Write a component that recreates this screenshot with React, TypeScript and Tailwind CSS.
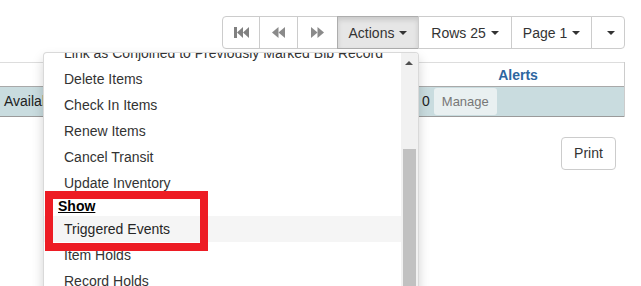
import React from "react";

const Caret = () => (
  <span className="inline-block ml-[5px] w-0 h-0 border-l-[4px] border-r-[4px] border-t-[4px] border-l-transparent border-r-transparent border-t-[#333] align-middle" />
);

const FastBack = () => (
  <svg width="15" height="11" viewBox="0 0 15 11">
    <rect x="0" y="0" width="3" height="11" fill="#808080" />
    <polygon points="3,5.5 9,0 9,11" fill="#808080" />
    <polygon points="9,5.5 15,0 15,11" fill="#808080" />
  </svg>
);
const Back = () => (
  <svg width="13" height="11" viewBox="0 0 13 11">
    <polygon points="0,5.5 6.5,0 6.5,11" fill="#8a8a8a" />
    <polygon points="6.5,5.5 13,0 13,11" fill="#8a8a8a" />
  </svg>
);
const Fwd = () => (
  <svg width="13" height="11" viewBox="0 0 13 11">
    <polygon points="0,0 6.5,5.5 0,11" fill="#8a8a8a" />
    <polygon points="6.5,0 13,5.5 6.5,11" fill="#8a8a8a" />
  </svg>
);

const items1 = [
  "Link as Conjoined to Previously Marked Bib Record",
  "Delete Items",
  "Check In Items",
  "Renew Items",
  "Cancel Transit",
  "Update Inventory",
];
const items2 = ["Item Holds", "Record Holds", "Item Notes"];

export default function App() {
  return (
    <div
      className="relative w-[641px] h-[286px] overflow-hidden bg-white text-[14px] text-[#333]"
      style={{ fontFamily: '"Liberation Sans", Arial, sans-serif' }}
    >
      {/* toolbar */}
      <div className="flex justify-end pt-[16px] pr-[16px]">
        <div className="flex h-[33px]">
          <div className="w-[38px] flex items-center justify-center border border-[#ccc] rounded-l-[4px] bg-white">
            <FastBack />
          </div>
          <div className="w-[39px] -ml-px flex items-center justify-center border border-[#ccc] bg-white">
            <Back />
          </div>
          <div className="w-[41px] -ml-px flex items-center justify-center border border-[#ccc] bg-white">
            <Fwd />
          </div>
          <div className="w-[82px] -ml-px flex items-center justify-center pt-px border border-[#adadad] bg-[#e6e6e6] shadow-[inset_0_3px_5px_rgba(0,0,0,0.125)]">
            Actions
            <Caret />
          </div>
          <div className="w-[94px] -ml-px flex items-center justify-center pt-px border border-[#ccc] bg-white">
            Rows 25
            <Caret />
          </div>
          <div className="w-[81px] -ml-px flex items-center justify-center pt-px border border-[#ccc] bg-white">
            Page 1
            <Caret />
          </div>
          <div className="w-[34px] -ml-px flex items-center justify-center pt-px border border-[#ccc] rounded-r-[4px] bg-white">
            <Caret />
          </div>
        </div>
      </div>

      {/* table */}
      <div className="mt-[13px] w-[625px] border-r border-[#ccc]">
        <div className="flex h-[24px] pt-[2px] border-t border-[#ddd] items-center">
          <div className="w-[412px]" />
          <div className="flex-1 text-center font-bold text-[#2d669f]">Alerts</div>
        </div>
        <div className="flex h-[31px] items-center bg-[#c9dcdf] border-t border-[#a9a9a9] border-b border-b-[#9a9a9a]">
          <div className="w-[422px] pl-[4px] text-[#222]">Available</div>
          <div className="text-[#222]">0</div>
          <div className="ml-[4px] w-[63px] h-[27px] flex items-center justify-center rounded-[3px] bg-[#e9f0f1] text-[#777] text-[13px]">
            Manage
          </div>
        </div>
      </div>

      {/* print */}
      <div className="flex justify-end pr-[25px] mt-[20px]">
        <div className="w-[55px] h-[33px] flex items-center justify-center border border-[#ccc] rounded-[4px] bg-white text-[#333]">
          Print
        </div>
      </div>

      {/* dropdown */}
      <div className="absolute left-[43px] top-[52px] w-[376px] h-[260px] bg-white border border-[rgba(0,0,0,0.15)] rounded-[4px] shadow-[0_6px_12px_rgba(0,0,0,0.175)] overflow-hidden">
        <div className="mt-[-13px] mr-[17px]">
          {items1.map((t) => (
            <div key={t} className="h-[26px] leading-[20px] py-[3px] pl-[20px] whitespace-nowrap text-[#333]">
              {t}
            </div>
          ))}
          <div className="h-[20px] leading-[20px] pl-[14px] font-bold underline text-black">Show</div>
          <div className="h-[26px] leading-[20px] py-[3px] pl-[20px] bg-[#f5f5f5] text-[#262626]">Triggered Events</div>
          {items2.map((t) => (
            <div key={t} className="h-[26px] leading-[20px] py-[3px] pl-[20px] text-[#333]">
              {t}
            </div>
          ))}
        </div>
        {/* scrollbar */}
        <div className="absolute right-0 top-0 bottom-0 w-[17px] bg-[#f1f1f1]">
          <div className="absolute left-[4px] top-[8px] w-0 h-0 border-l-[4px] border-r-[4px] border-b-[4px] border-l-transparent border-r-transparent border-b-[#505050]" />
          <div className="absolute left-[2px] right-[2px] top-[96px] h-[200px] bg-[#c1c1c1]" />
        </div>
      </div>

      {/* red highlight box */}
      <div className="absolute left-[45px] top-[191px] w-[163px] h-[60px] border-[8px] border-[#ed1c24]" />
    </div>
  );
}
